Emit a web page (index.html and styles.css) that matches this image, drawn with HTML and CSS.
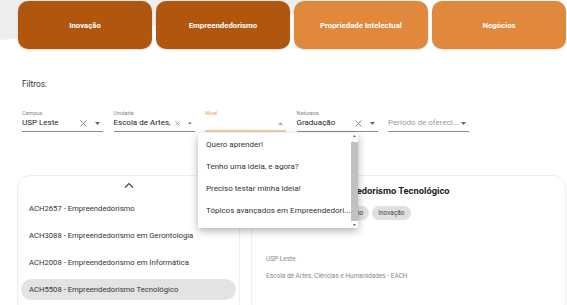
FILE: index.html
```html
<!DOCTYPE html>
<html lang="pt-BR">
<head>
    <meta charset="UTF-8">
    <meta name="viewport" content="width=device-width, initial-scale=1.0">
    <title>Disciplinas</title>
    <link rel="stylesheet" href="styles.css">
</head>
<body>
    <header class="hero">
        <svg class="hero-wave" width="567" height="60" viewBox="0 0 567 60">
            <path d="M0 0 H420 C360 8 250 18 140 27 C80 32 30 37 0 40 Z" fill="#eeeeee"/>
        </svg>
        <nav class="nav-buttons">
            <button class="nav-btn dark">Inovação</button>
            <button class="nav-btn dark">Empreendedorismo</button>
            <button class="nav-btn light">Propriedade Intelectual</button>
            <button class="nav-btn light">Negócios</button>
        </nav>
    </header>

    <p class="filters-title">Filtros:</p>

    <div class="filters">
        <div class="field">
            <span class="field-label">Campus</span>
            <div class="field-input">
                <span class="field-value">USP Leste</span>
                <svg class="clear-icon" width="7" height="7" viewBox="0 0 7 7"><path d="M0.5 0.5 L6.5 6.5 M6.5 0.5 L0.5 6.5" stroke="#777" stroke-width="0.9"/></svg>
                <svg class="arrow-icon" width="5" height="3" viewBox="0 0 5 3"><path d="M0 0 H5 L2.5 3 Z" fill="#666"/></svg>
            </div>
        </div>
        <div class="field">
            <span class="field-label">Unidade</span>
            <div class="field-input">
                <span class="field-value">Escola de Artes,</span>
                <svg class="clear-icon" width="7" height="7" viewBox="0 0 7 7"><path d="M0.5 0.5 L6.5 6.5 M6.5 0.5 L0.5 6.5" stroke="#777" stroke-width="0.9"/></svg>
                <svg class="arrow-icon" width="5" height="3" viewBox="0 0 5 3"><path d="M0 0 H5 L2.5 3 Z" fill="#666"/></svg>
            </div>
        </div>
        <div class="field active">
            <span class="field-label">Nível</span>
            <div class="field-input">
                <span class="field-value"></span>
                <svg class="arrow-icon" width="5" height="3" viewBox="0 0 5 3"><path d="M0 3 H5 L2.5 0 Z" fill="#d9a679"/></svg>
            </div>
        </div>
        <div class="field">
            <span class="field-label">Natureza</span>
            <div class="field-input">
                <span class="field-value">Graduação</span>
                <svg class="clear-icon" width="7" height="7" viewBox="0 0 7 7"><path d="M0.5 0.5 L6.5 6.5 M6.5 0.5 L0.5 6.5" stroke="#777" stroke-width="0.9"/></svg>
                <svg class="arrow-icon" width="5" height="3" viewBox="0 0 5 3"><path d="M0 0 H5 L2.5 3 Z" fill="#666"/></svg>
            </div>
        </div>
        <div class="field">
            <span class="field-label">&nbsp;</span>
            <div class="field-input">
                <span class="field-value placeholder">Período de ofereci...</span>
                <svg class="arrow-icon" width="5" height="3" viewBox="0 0 5 3"><path d="M0 0 H5 L2.5 3 Z" fill="#666"/></svg>
            </div>
        </div>
    </div>

    <main class="content">
        <section class="card list-card">
            <div class="list-up">
                <svg width="10" height="6" viewBox="0 0 10 6"><path d="M1 5.5 L5 1.5 L9 5.5" stroke="#444" stroke-width="1.2" fill="none"/></svg>
            </div>
            <ul class="course-list">
                <li class="course">ACH2657 - Empreendedorismo</li>
                <li class="course">ACH3088 - Empreendedorismo em Gerontologia</li>
                <li class="course">ACH2008 - Empreendedorismo em Informática</li>
                <li class="course selected">ACH5508 - Empreendedorismo Tecnológico</li>
            </ul>
        </section>

        <section class="card detail-card">
            <h2 class="detail-title">ACH5508 - Empreendedorismo Tecnológico</h2>
            <div class="chips">
                <span class="chip">Empreendedorismo</span>
                <span class="chip">Ensino</span>
                <span class="chip">Inovação</span>
            </div>
            <p class="detail-info first">USP Leste</p>
            <p class="detail-info">Escola de Artes, Ciências e Humanidades - EACH</p>
        </section>
    </main>

    <div class="menu">
        <ul class="menu-items">
            <li>Quero aprender!</li>
            <li>Tenho uma ideia, e agora?</li>
            <li>Preciso testar minha ideia!</li>
            <li>Tópicos avançados em Empreendedori...</li>
        </ul>
        <div class="menu-scroll">
            <svg width="7" height="6" viewBox="0 0 7 6"><path d="M2 4 H5 L3.5 2 Z" fill="#666"/></svg>
            <div class="menu-thumb"></div>
            <svg width="7" height="6" viewBox="0 0 7 6"><path d="M2 2 H5 L3.5 4 Z" fill="#666"/></svg>
        </div>
    </div>
</body>
</html>
```

FILE: styles.css
```css
/* Reset */
*
{
    margin: 0;
    padding: 0;
    box-sizing: border-box;
}

body
{
    position: relative;
    width: 567px;
    height: 305px;
    overflow: hidden;
    background-color: #fff;
    color: #333;
    font-family: Roboto, "Liberation Sans", Arial, sans-serif;
}

ul
{
    list-style: none;
}

/* Top buttons */
.hero
{
    position: relative;
    height: 50px;
}

.hero-wave
{
    position: absolute;
    top: 0;
    left: 0;
}

.nav-buttons
{
    position: relative;
    display: flex;
    gap: 4px;
    padding: 1px 0 0 18px;
}

.nav-btn
{
    width: 134px;
    height: 48px;
    border: none;
    border-radius: 10px;
    color: #fff;
    font-family: Roboto, "Liberation Sans", Arial, sans-serif;
    font-size: 7.8px;
    font-weight: 700;
    box-shadow: 0 1px 2px rgba(0, 0, 0, 0.15);
}

.nav-btn.dark
{
    background-color: #b0560e;
}

.nav-btn.light
{
    background-color: #e0883c;
}

/* Filters */
.filters-title
{
    margin: 28px 0 0 22px;
    font-size: 8.3px;
    line-height: 12px;
    color: #333;
}

.filters
{
    display: flex;
    gap: 10.5px;
    margin: 19px 0 0 22px;
}

.field
{
    display: flex;
    flex-direction: column;
    width: 81px;
}

.field-label
{
    font-size: 5.5px;
    line-height: 8px;
    color: #888;
}

.field-input
{
    display: flex;
    align-items: center;
    height: 15px;
    padding-bottom: 2px;
    border-bottom: 1px solid #8d8d8d;
}

.field-value
{
    flex: 1;
    white-space: nowrap;
    font-size: 8px;
    line-height: 12px;
    color: #222;
}

.field-value.placeholder
{
    color: #999;
}

.clear-icon
{
    margin: 0 8px 0 4px;
}

.arrow-icon
{
    margin-right: 3px;
}

.field.active .field-label
{
    color: #e9a465;
}

.field.active .field-input
{
    border-bottom: 2px solid #f7cda6;
    padding-bottom: 1px;
}

/* Cards */
.content
{
    display: flex;
    gap: 11px;
    margin: 43px 0 0 17px;
}

.card
{
    border: 1px solid #eeeeee;
    border-radius: 13px;
    height: 140px;
}

.list-card
{
    width: 223px;
    padding: 3px 3px 0;
}

.list-up
{
    display: flex;
    justify-content: center;
    padding-top: 3px;
    height: 19px;
}

.course-list
{
    display: flex;
    flex-direction: column;
    gap: 6px;
}

.course
{
    height: 21px;
    line-height: 21px;
    padding-left: 8px;
    border-radius: 11px;
    font-size: 7.7px;
    color: #333;
}

.course.selected
{
    background-color: #e3e3e3;
}

.detail-card
{
    width: 315px;
    padding: 9px 14px 0;
}

.detail-title
{
    font-size: 9.3px;
    line-height: 12px;
    font-weight: 700;
    color: #222;
    white-space: nowrap;
}

.chips
{
    display: flex;
    gap: 3px;
    margin-top: 9px;
}

.chip
{
    height: 14px;
    line-height: 14px;
    padding: 0 6px;
    border-radius: 7px;
    background-color: #e0e0e0;
    font-size: 6.5px;
    color: #444;
}

.detail-info
{
    font-size: 6.5px;
    line-height: 10px;
    color: #888;
    margin-top: 7px;
}

.detail-info.first
{
    margin-top: 34px;
}

/* Open select menu */
.menu
{
    position: absolute;
    left: 198px;
    top: 133px;
    width: 160px;
    height: 95px;
    display: flex;
    background-color: #fff;
    box-shadow: 0 3px 8px rgba(0, 0, 0, 0.3);
}

.menu-items
{
    flex: 1;
    padding-top: 1px;
}

.menu-items li
{
    height: 22px;
    line-height: 22px;
    padding-left: 8px;
    font-size: 8px;
    color: #333;
    white-space: nowrap;
}

.menu-scroll
{
    display: flex;
    flex-direction: column;
    align-items: center;
    width: 7px;
    margin-right: 1px;
}

.menu-thumb
{
    flex: 1;
    width: 7px;
    margin: 3px 0 1px;
    background-color: #c1c1c1;
}
```
